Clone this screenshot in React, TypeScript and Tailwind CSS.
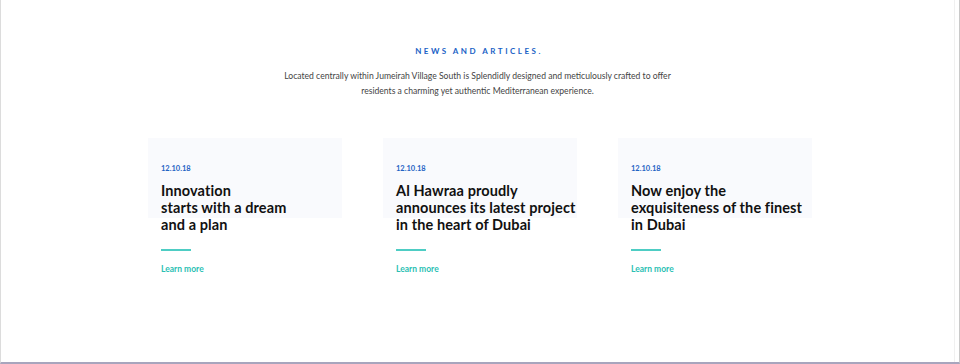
// News & articles section
const posts = [
  { date: "12.10.18", title: ["Innovation", "starts with a dream", "and a plan"] },
  { date: "12.10.18", title: ["Al Hawraa proudly", "announces its latest project", "in the heart of Dubai"] },
  { date: "12.10.18", title: ["Now enjoy the", "exquisiteness of the finest", "in Dubai"] },
];

function PostCard({ date, title }: { date: string; title: string[] }) {
  return (
    <div className="relative w-[194px]">
      <div className="absolute left-0 top-0 h-[80px] w-full bg-[#f9fafd]" />
      <div className="relative px-[13px] pt-[26px]">
        <p className="text-[7.5px] font-bold leading-[10px] text-[#1f63c4] font-['Lato',sans-serif]">{date}</p>
        <h3 className="mt-[8px] text-[14.5px] font-bold leading-[17px] text-[#111] font-['Lato',sans-serif] tracking-[0.1px]">
          {title.map((t, i) => (
            <span key={i} className="block whitespace-nowrap">{t}</span>
          ))}
        </h3>
        <div className="mt-[16px] h-[2px] w-[30px] bg-[#4ecdc4]" />
        <a className="mt-[12px] block text-[8.5px] font-bold leading-[12px] text-[#2bbfb3] font-['Lato',sans-serif]">Learn more</a>
      </div>
    </div>
  );
}

export default function App() {
  return (
    <div className="flex h-[364px] w-[960px] border-b-2 border-l border-r border-b-[#a8a5bd] border-l-[#dcdcdc] border-r-[#c9c9c9] bg-white">
      <div className="flex-1">
        <div className="flex flex-col items-center pt-[46px]">
          <h2 className="pl-[3px] text-[8px] font-bold leading-[10px] tracking-[2.5px] text-[#1a62c6] font-['Lato',sans-serif]">
            NEWS AND ARTICLES.
          </h2>
          <p className="mt-[13px] w-[396px] text-center text-[8.6px] leading-[15px] text-[#444] font-['Lato',sans-serif]">
            Located centrally within Jumeirah Village South is Splendidly designed and meticulously crafted to offer residents a charming yet authentic Mediterranean experience.
          </p>
        </div>
        <div className="mt-[39px] flex gap-[41px] pl-[147px]">
          {posts.map((p, i) => (
            <PostCard key={i} {...p} />
          ))}
        </div>
      </div>
      <div className="w-[5px] border-l border-l-[#f0f0f0]" />
    </div>
  );
}
